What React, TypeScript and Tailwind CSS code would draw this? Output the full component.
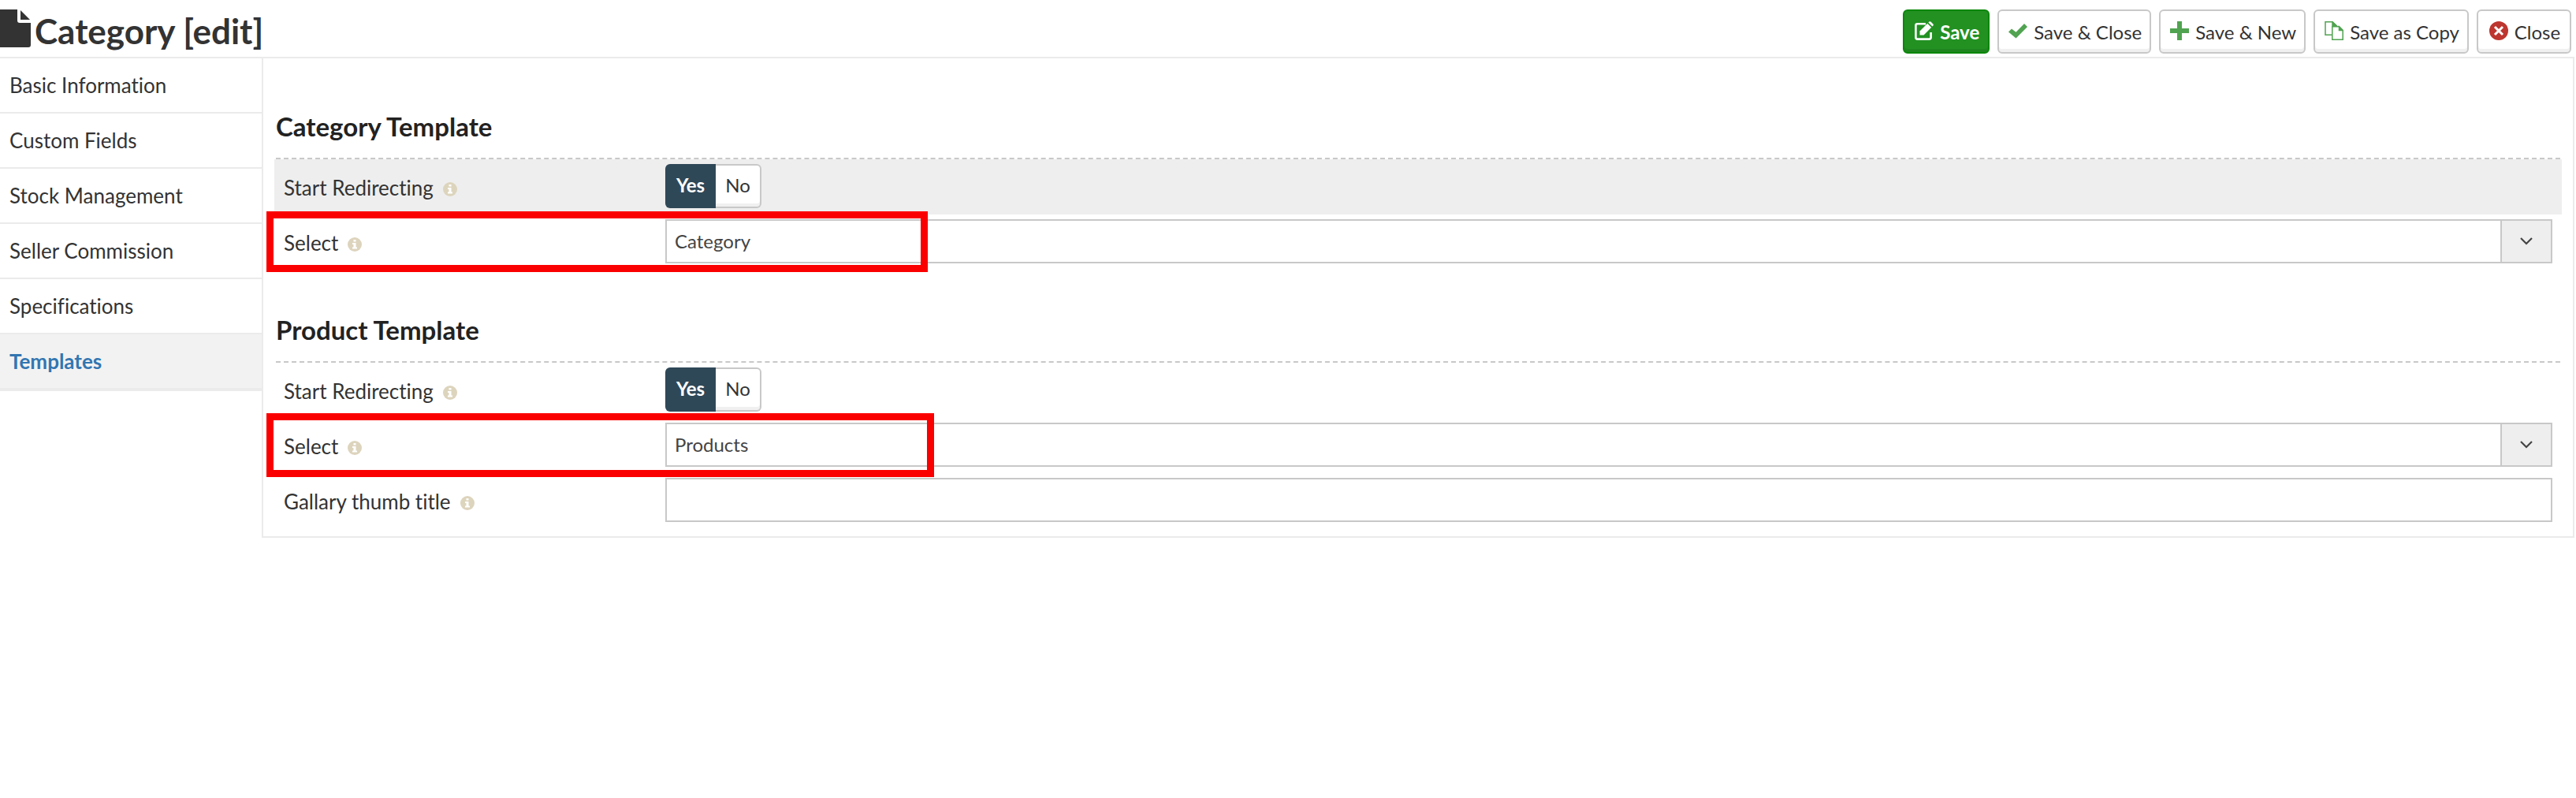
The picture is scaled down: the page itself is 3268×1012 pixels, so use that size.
import { useState } from "react";
import type { ReactNode } from "react";

function DocumentIcon() {
  return (
    <svg viewBox="0 0 40 48" className="h-12 w-10 shrink-0 fill-[#333]" aria-hidden="true">
      <path d="M0 0H22V14Q22 17 25 17H39V45Q39 48 36 48H0Z" />
      <path d="M26 1L38 13H26Z" />
    </svg>
  );
}

function EditIcon() {
  return (
    <svg viewBox="0 0 24 24" className="size-6" aria-hidden="true">
      <path d="M14 3.200H3.500Q1.400 3.200 1.400 5.200V20.500Q1.400 22.600 3.500 22.600H18.500Q20.600 22.600 20.600 20.500V14" fill="none" stroke="#fff" strokeWidth="2.600" />
      <path d="M6.500 17.500V12.500L16.200 2.800L21.200 7.800L11.500 17.500Z" fill="#fff" />
      <path d="M17.400 1.600L18.400 .6Q19.400 -.2 20.400 .6L23.400 3.600Q24.200 4.600 23.400 5.600L22.400 6.600Z" fill="#fff" />
    </svg>
  );
}

function CheckIcon() {
  return (
    <svg viewBox="0 0 24 24" className="size-6 fill-[#51a351]" aria-hidden="true">
      <path d="M20 3L24 7L9.500 21.500L0 13.500L4 9.500L9.500 13.800Z" />
    </svg>
  );
}

function PlusIcon() {
  return (
    <svg viewBox="0 0 24 24" className="size-6 fill-[#51a351]" aria-hidden="true">
      <path d="M9 0H15V9H24V15H15V24H9V15H0V9H9Z" />
    </svg>
  );
}

function CopyIcon() {
  return (
    <svg viewBox="0 0 24 24" className="size-6 fill-white stroke-[#51a351] stroke-[1.5]" aria-hidden="true">
      <path d="M1 .8H10L15 5.500V17.200H1Z" />
      <path d="M10 .8V5.500H15Z" fill="#51a351" />
      <path d="M9.800 6.800H18.500L23.200 11.500V23.200H9.800Z" />
      <path d="M18.500 6.800V11.500H23.200Z" fill="#51a351" />
    </svg>
  );
}

function CancelIcon() {
  return (
    <svg viewBox="0 0 24 24" className="size-6" aria-hidden="true">
      <circle cx="12" cy="12" r="12" fill="#bd362f" />
      <path d="M7 7L17 17M17 7L7 17" stroke="#fff" strokeWidth="3" />
    </svg>
  );
}

function InfoIcon() {
  return (
    <svg viewBox="0 0 18 18" className="mt-1 size-[18px]" aria-hidden="true">
      <circle cx="9" cy="9" r="9" fill="#ddd4bd" />
      <path d="M7.500 3H10.500V5.500H7.500ZM6 7H10.500V12.500H12V14.500H6V12.500H7.500V9H6Z" fill="#fff" />
    </svg>
  );
}

function ToolbarButton({ icon, children }: { icon: ReactNode; children: ReactNode }) {
  return (
    <button
      type="button"
      className="flex h-14 min-w-[120px] items-center justify-center gap-2 rounded-md border-2 border-[#c8c8c8] bg-white pr-2.5 pb-0.5 pl-3 text-[#333] shadow-[inset_0_-4px_0_#f0f0f0]"
    >
      {icon}
      <span className="pt-1">{children}</span>
    </button>
  );
}

const tabs = [
  "Basic Information",
  "Custom Fields",
  "Stock Management",
  "Seller Commission",
  "Specifications",
  "Templates",
];

function Row({
  label,
  htmlFor,
  shaded = false,
  mark,
  children,
}: {
  label: string;
  htmlFor?: string;
  shaded?: boolean;
  mark?: ReactNode;
  children: ReactNode;
}) {
  return (
    <div className={shaded ? "flex h-[70px] items-start bg-[#eee] px-3 pt-1.5" : "relative flex h-[70px] items-start px-3 pt-1.5"}>
      <div className="flex h-[60px] w-[484px] shrink-0 items-center gap-3">
        <label htmlFor={htmlFor}>{label}</label>
        <InfoIcon />
      </div>
      {children}
      {mark}
    </div>
  );
}

function YesNo({ label }: { label: string }) {
  const [value, setValue] = useState(true);
  return (
    <div role="group" aria-label={label} className="flex h-14 text-2xl">
      <button
        type="button"
        aria-pressed={value}
        onClick={() => setValue(true)}
        className={
          value
            ? "w-16 rounded-l-md bg-[#2f4858] pb-0.5 font-bold text-white"
            : "w-16 rounded-l-md border-2 border-[#c8c8c8] bg-white pb-0.5 shadow-[inset_0_-4px_0_#f0f0f0]"
        }
      >
        Yes
      </button>
      <button
        type="button"
        aria-pressed={!value}
        onClick={() => setValue(false)}
        className={
          value
            ? "w-[58px] rounded-r-md border-2 border-l-0 border-[#c8c8c8] bg-white pb-0.5 shadow-[inset_0_-4px_0_#f0f0f0]"
            : "w-[58px] rounded-r-md bg-[#2f4858] pb-0.5 font-bold text-white"
        }
      >
        No
      </button>
    </div>
  );
}

function SelectBox({ id, value }: { id: string; value: string }) {
  return (
    <div className="grid h-14 flex-1 grid-cols-[1fr_66px]">
      <select
        id={id}
        defaultValue={value}
        className="col-span-2 col-start-1 row-start-1 appearance-none border-2 border-[#c8c8c8] bg-white px-2.5 text-2xl text-[#444]"
      >
        <option>{value}</option>
      </select>
      <div className="pointer-events-none col-start-2 row-start-1 flex items-center justify-center border-2 border-[#c8c8c8] bg-[#eee]">
        <svg viewBox="0 0 16 10" className="h-2.5 w-4" aria-hidden="true">
          <path d="M1 1L8 8L15 1" fill="none" stroke="#444" strokeWidth="2.200" />
        </svg>
      </div>
    </div>
  );
}

function SectionTitle({ children }: { children: ReactNode }) {
  return (
    <h2 className="mx-0.5 flex h-[118px] items-end border-b-2 border-dashed border-[#c8c8c8] pb-5 text-[33px] leading-10 font-bold text-[#222]">
      {children}
    </h2>
  );
}

export default function App() {
  return (
    <div className="min-h-screen bg-white font-['Lato',sans-serif] text-[26px] leading-8 text-[#333] [font-variant-ligatures:no-common-ligatures]">
      <header className="flex h-[72px] items-center justify-between pr-1.5">
        <div className="flex items-center gap-1">
          <DocumentIcon />
          <h1 className="pt-1.5 text-[44px] leading-14 font-bold">Category [edit]</h1>
        </div>
        <div className="flex gap-2.5 pt-2 text-2xl">
          <button
            type="button"
            className="flex h-14 min-w-[110px] items-center justify-center gap-2 rounded-md border-2 border-[#0a870a] bg-[#229122] pr-2.5 pb-0.5 pl-3 font-bold text-white shadow-[inset_0_-4px_0_#1f851f]"
          >
            <EditIcon />
            <span className="pt-1">Save</span>
          </button>
          <ToolbarButton icon={<CheckIcon />}>Save &amp; Close</ToolbarButton>
          <ToolbarButton icon={<PlusIcon />}>Save &amp; New</ToolbarButton>
          <ToolbarButton icon={<CopyIcon />}>Save as Copy</ToolbarButton>
          <ToolbarButton icon={<CancelIcon />}>Close</ToolbarButton>
        </div>
      </header>
      <div className="mr-0.5 flex items-start border-t-2 border-[#ebebeb]">
        <nav className="w-[332px] shrink-0 border-b-2 border-[#ebebeb]">
          <ul>
            {tabs.map((tab) => (
              <li key={tab} className="border-b-2 border-[#ebebeb]">
                <a
                  href="#"
                  className={
                    tab === "Templates"
                      ? "flex h-[68px] items-center bg-[#f2f2f2] px-3 font-bold text-[#3276b1]"
                      : "flex h-[68px] items-center px-3"
                  }
                >
                  {tab}
                </a>
              </li>
            ))}
          </ul>
        </nav>
        <main className="flex-1 border-r-2 border-b-2 border-l-2 border-[#ebebeb] px-3.5 py-2.5">
          <section>
            <SectionTitle>Category Template</SectionTitle>
            <Row label="Start Redirecting" shaded>
              <YesNo label="Start Redirecting" />
            </Row>
            <Row
              label="Select"
              htmlFor="category-template"
              mark={
                <div className="pointer-events-none absolute -top-1 -left-2.5 h-[77px] w-[839px] border-9 border-[#fb0000]" />
              }
            >
              <SelectBox id="category-template" value="Category" />
            </Row>
          </section>
          <section>
            <SectionTitle>Product Template</SectionTitle>
            <Row label="Start Redirecting">
              <YesNo label="Start Redirecting" />
            </Row>
            <Row
              label="Select"
              htmlFor="product-template"
              mark={
                <div className="pointer-events-none absolute -top-1.5 -left-2.5 h-[81px] w-[847px] border-9 border-[#fb0000]" />
              }
            >
              <SelectBox id="product-template" value="Products" />
            </Row>
            <Row label="Gallary thumb title" htmlFor="thumb-title">
              <input id="thumb-title" type="text" className="h-14 flex-1 border-2 border-[#c8c8c8] px-2.5 text-2xl" />
            </Row>
          </section>
        </main>
      </div>
    </div>
  );
}
